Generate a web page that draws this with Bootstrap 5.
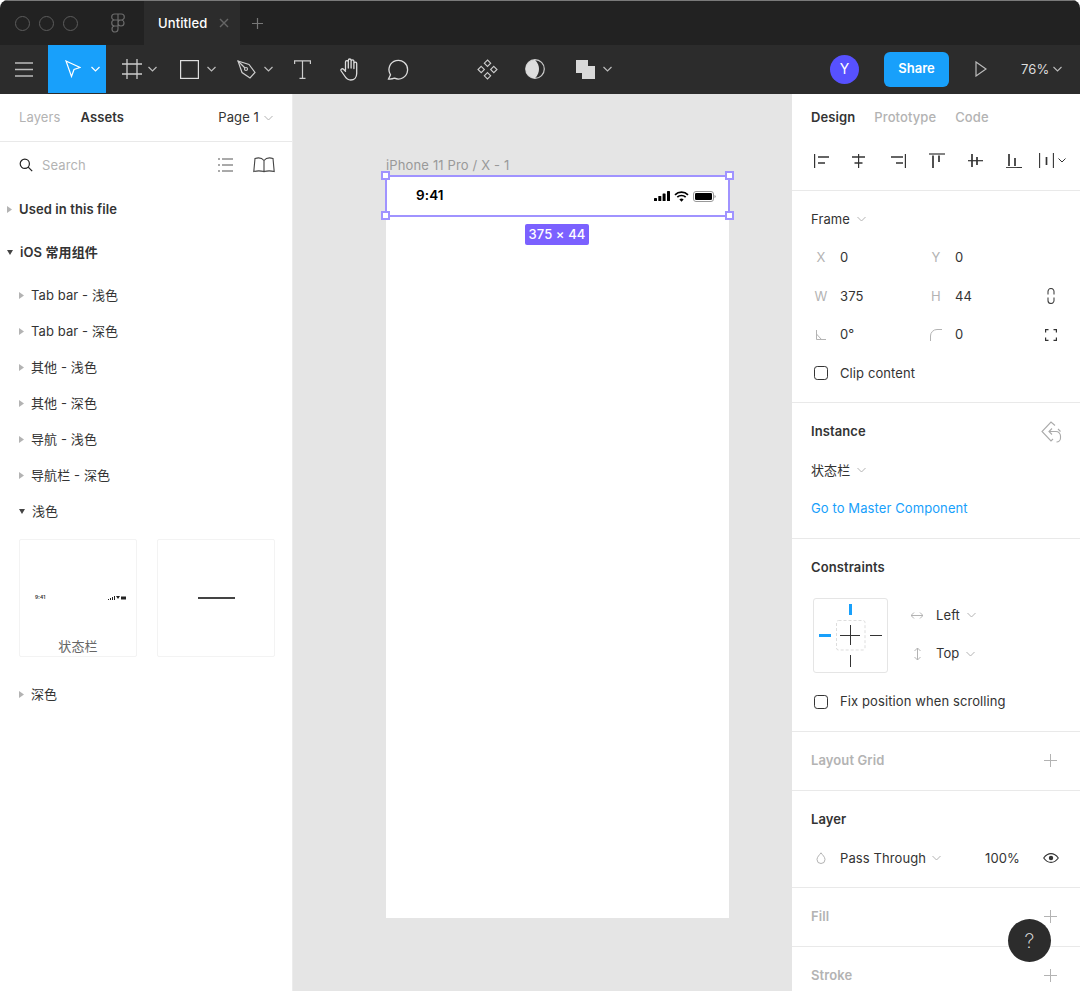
<!DOCTYPE html>
<html lang="en">
<head>
<meta charset="utf-8">
<title>Figma</title>
<link href="https://cdn.jsdelivr.net/npm/bootstrap@5.3.0/dist/css/bootstrap.min.css" rel="stylesheet">
<style>
html,body{height:991px;overflow:hidden;background:#fff}
body{font-family:Inter,"Noto Sans CJK SC",sans-serif;font-size:13px;color:#333;line-height:1;letter-spacing:.1px;-webkit-font-smoothing:antialiased}
svg{display:block;flex:none}
.winframe{height:991px;overflow:hidden;position:relative;border-radius:8px 8px 0 0}
.titlebar{height:45px;background:#222;border-top:1px solid #7a7a7a}
.traffic{width:15px;height:15px;border:1px solid #5c5c5c;border-radius:50%}
.traffics{gap:9px;padding-left:15px;width:110px}
.logoslot{width:34px}
.tabitem{width:96px;height:44px;background:#2c2c2c;color:#fff;font-weight:500;padding-left:14px}
.tabclose{margin-left:12px}
.plusslot{margin-left:11px}
.toolbar{height:49px;background:#2c2c2c;color:#ddd}
.slot{height:48px}
.s48{width:48px}.s57{width:57.5px;padding-left:16.5px}
.activetool{background:#18a0fb}
.chev{margin-left:8px}
.chevwide{margin-left:10px}
.chevtight{margin-left:6px}
.gap41{width:41px}
.toolright{height:48px}
.avatar{width:29px;height:29px;border-radius:50%;background:#5751ff;color:#fff;font-size:14px;margin-right:25px}
.sharebtn{width:65px;height:35px;padding:0;background:#18a0fb;border:0;border-radius:6px;color:#fff;font-size:13px;font-weight:600;margin-right:26px}
.sharebtn:hover{background:#18a0fb;color:#fff}
.zoomval{margin-left:34px;margin-right:18px;color:#ddd;width:41px}
.workarea{height:897px}
.leftpane{width:293px;border-right:1px solid #ececec;background:#fff;flex:none}
.lefttabs{height:48px;padding:0 19px;border-bottom:1px solid #e9e9e9}
.mutedtxt{color:#b3b3b3}
.strong600{font-weight:600;color:#333}
.ms20{margin-left:20px}
.pagechev{margin-left:5px}
.searchrow{height:46px;padding:0 17px 0 19px}
.searchtxt{margin-left:9px;color:#b3b3b3}
.ms20b{margin-left:20px}
.grouprow{height:43px;padding-left:7px}
.itemrow{height:36px;padding-left:19px}
.itemrow .tri,.grouprow .tri{margin-right:7px}
.firstitem{margin-top:3px}
.thumbs{gap:20px;padding:10px 0 19px 19px}
.thumbbox{width:118px;height:118px;border:1px solid #f3f3f3;border-radius:2px;position:relative;flex:none}
.tinytime{font-size:5px;color:#333;position:absolute;left:15px;top:55px;font-weight:600}
.tinyicons{position:absolute;right:10px;top:56px}
.tinyline{width:37px;height:2px;background:#444}
.thumbname{position:absolute;left:0;right:0;bottom:3px;text-align:center;color:#666}
.canvasarea{background:#e5e5e5;position:relative;overflow:hidden}
.framelabel{position:absolute;left:93px;top:65px;color:#999;font-size:13px;letter-spacing:.15px}
.frameboard{position:absolute;left:93px;top:81px;width:343px;height:743px;background:#fff}
.selbox{position:absolute;left:92px;top:81px;width:345px;height:42px;border:2px solid #a093ff}
.handle{position:absolute;width:9px;height:9px;background:#fff;border:2px solid #a093ff}
.hnw{left:88px;top:77px}.hne{left:432px;top:77px}.hsw{left:88px;top:117px}.hse{left:432px;top:117px}
.statusbar{position:absolute;left:93px;top:81px;width:343px;height:42px;padding:0 13px 0 30px}
.statustime{font-weight:600;font-size:13.500px;color:#000}
.sizebadge{position:absolute;left:232px;top:130px;width:64px;height:21px;background:#7b61ff;color:#fff;border-radius:2px;font-weight:500;font-size:13px}
.rightpane{width:288px;background:#fff;flex:none;overflow:hidden}
.sect{padding:9.5px 19px;border-bottom:1px solid #e9e9e9}
.sectextra{padding-bottom:10.5px}
.sectfirst{padding:0 19px 10px;height:96.5px}
.rtabs{height:46px;gap:19px}
.alignrow{height:40px;padding-left:3px;gap:22.4px}
.distgroup{margin-left:-5px;gap:4px}
.prow{height:38.5px;white-space:nowrap}
.flabel{width:20px;margin-right:9px;color:#b3b3b3;flex:none;text-align:center}
.fcol{width:115px;flex:none}
.ficon{width:20px}
.boxcheck{width:14px;height:14px;margin:0 12px 0 3px;border:1px solid #333;border-radius:2px;flex:none;background:#fff}
.boxcheck:focus{box-shadow:none;border-color:#333}
.linkblue{color:#18a0fb;text-decoration:none}
.ctrlblock{height:77px;margin-bottom:9.5px;margin-top:9.5px}
.ctrlbox{margin:2px 0 0 2px;width:75px;height:75px;border:1px solid #e5e5e5;border-radius:3px}
.ctrlcol{margin-left:17px}
.ctrlslot{width:24px;margin-right:7px}
.helpbtn{position:absolute;left:1008px;top:919px;width:43px;height:43px;border-radius:50%;background:#2c2c2c;color:#e8e8e8;font-size:20px;font-weight:200}
.disabledhead{color:#b3b3b3;font-weight:600}
.pct{margin-left:44px;width:58px}
.instanceicon{margin-right:-1px}
.dropchev{margin-left:7px}
.passchev{margin-left:6px}
</style>
</head>
<body>
<div class="winframe">
  <header class="titlebar d-flex align-items-center">
    <div class="traffics d-flex"><span class="traffic"></span><span class="traffic"></span><span class="traffic"></span></div>
    <div class="logoslot">
      <svg width="16" height="20" viewBox="0 0 16 20" fill="none" stroke="#6a6a6a" stroke-width="1.2"><path d="M8 1H4.700a3 3 0 0 0 0 6H8zM8 1h3.300a3 3 0 0 1 0 6H8zM8 7H4.700a3 3 0 0 0 0 6H8zM8 10a3 3 0 1 0 6 0a3 3 0 1 0-6 0zM8 13H4.700a3 3 0 1 0 3.300 3z"/></svg>
    </div>
    <div class="tabitem d-flex align-items-center">Untitled
      <svg class="tabclose" width="10" height="10" viewBox="0 0 10 10" stroke="#666" stroke-width="1.4"><path d="M1 1l8 8M9 1l-8 8"/></svg>
    </div>
    <div class="plusslot"><svg width="13" height="13" viewBox="0 0 13 13" stroke="#777" stroke-width="1.2"><path d="M6.500 1v11M1 6.500h11"/></svg></div>
  </header>

  <nav class="toolbar d-flex align-items-start">
    <div class="slot s48 d-flex align-items-center justify-content-center">
      <svg width="18" height="15" viewBox="0 0 18 15" stroke="#bbb" stroke-width="1.5"><path d="M0 1h18M0 7.500h18M0 14h18"/></svg>
    </div>
    <div class="slot s57 activetool d-flex align-items-center">
      <svg width="16" height="18" viewBox="0 0 16 18" fill="none" stroke="#fff" stroke-width="1.2"><path d="M1 1l14 6.500-6 2-2.500 7z"/></svg>
      <svg class="chevwide" width="9" height="6" viewBox="0 0 9 6" fill="none" stroke="#fff" stroke-width="1.2"><path d="M.5 1l4 4 4-4"/></svg>
    </div>
    <div class="slot s57 d-flex align-items-center">
      <svg width="20" height="20" viewBox="0 0 20 20" fill="none" stroke="#ccc" stroke-width="1.3"><path d="M5 0v20M15 0v20M0 5h20M0 15h20"/></svg>
      <svg class="chevtight" width="9" height="6" viewBox="0 0 9 6" fill="none" stroke="#bbb" stroke-width="1.2"><path d="M.5 1l4 4 4-4"/></svg>
    </div>
    <div class="slot s57 d-flex align-items-center">
      <svg width="19" height="19" viewBox="0 0 19 19" fill="none" stroke="#ddd" stroke-width="1.2"><rect x=".6" y=".6" width="17.800" height="17.800"/></svg>
      <svg class="chev" width="9" height="6" viewBox="0 0 9 6" fill="none" stroke="#bbb" stroke-width="1.2"><path d="M.5 1l4 4 4-4"/></svg>
    </div>
    <div class="slot s57 d-flex align-items-center">
      <svg width="19" height="19" viewBox="0 0 19 19" fill="none" stroke="#ccc" stroke-width="1.200"><path d="M1 1l11 3.500 6 8-5 5.500-8-5.500z"/><path d="M1 1l7 7"/><circle cx="9" cy="9" r="1.500"/></svg>
      <svg class="chev" width="9" height="6" viewBox="0 0 9 6" fill="none" stroke="#bbb" stroke-width="1.2"><path d="M.5 1l4 4 4-4"/></svg>
    </div>
    <div class="slot s48 d-flex align-items-center justify-content-center">
      <svg width="17" height="19" viewBox="0 0 17 19" fill="none" stroke="#ccc" stroke-width="1.200"><path d="M.6 4V.8h15.800V4M8.500.8v17.600M5.500 18.400h6"/></svg>
    </div>
    <div class="slot s48 d-flex align-items-center justify-content-center">
      <svg width="21" height="23" viewBox="0 0 21 23" fill="none" stroke="#ddd" stroke-width="1.300" stroke-linejoin="round" stroke-linecap="round"><path d="M5.500 12V4a1.400 1.400 0 0 1 2.800 0v6M8.300 10V2.400a1.400 1.400 0 0 1 2.800 0V10M11.100 10V3.200a1.400 1.400 0 0 1 2.800 0V10M13.900 10.500V5.500a1.400 1.400 0 0 1 2.800 0v10c0 4-2.500 6.500-6 6.500-3 0-4.500-1.500-6-4l-3.500-5c-1-1.500 1-3 2.300-1.700l2 2"/></svg>
    </div>
    <div class="slot s48 d-flex align-items-center justify-content-center">
      <svg width="22" height="21" viewBox="0 0 22 21" fill="none" stroke="#ddd" stroke-width="1.300"><path d="M1.500 20l2-4.200A9.300 9.300 0 1 1 7.500 19.200c-2 .8-4 .9-6 .8z"/></svg>
    </div>
    <div class="gap41"></div>
    <div class="slot s48 d-flex align-items-center justify-content-center">
      <svg width="21" height="21" viewBox="0 0 21 21" fill="none" stroke="#ccc" stroke-width="1.100"><path d="M10.500 1l3.200 3.200-3.200 3.200-3.200-3.200zM10.500 13.600l3.200 3.200-3.200 3.200-3.200-3.200zM4.200 7.300l3.200 3.200-3.200 3.200L1 10.500zM16.800 7.300l3.200 3.200-3.200 3.200-3.200-3.200z"/></svg>
    </div>
    <div class="slot s48 d-flex align-items-center justify-content-center">
      <svg width="20" height="20" viewBox="0 0 20 20"><circle cx="10" cy="10" r="9.300" fill="none" stroke="#ccc" stroke-width="1.200"/><path d="M10 .7A9.300 9.300 0 0 0 10 19.300C13 16 14 13 14 10S13 4 10 .7z" fill="#ddd"/></svg>
    </div>
    <div class="slot s57 d-flex align-items-center">
      <svg width="19" height="19" viewBox="0 0 19 19"><path d="M0 0h12v6h7v13H6v-6H0z" fill="#d9d9d9"/></svg>
      <svg class="chev" width="9" height="6" viewBox="0 0 9 6" fill="none" stroke="#bbb" stroke-width="1.2"><path d="M.5 1l4 4 4-4"/></svg>
    </div>
    <div class="toolright ms-auto d-flex align-items-center">
      <div class="avatar d-flex align-items-center justify-content-center">Y</div>
      <button type="button" class="btn sharebtn">Share</button>
      <svg width="12" height="16" viewBox="0 0 12 16" fill="none" stroke="#bbb" stroke-width="1.200"><path d="M1 1l10 7-10 7z"/></svg>
      <div class="zoomval d-flex align-items-center justify-content-between">76%
        <svg width="9" height="6" viewBox="0 0 9 6" fill="none" stroke="#bbb" stroke-width="1.100"><path d="M.5 1l4 4 4-4"/></svg>
      </div>
    </div>
  </nav>

  <main class="workarea d-flex">
    <aside class="leftpane">
      <div class="lefttabs d-flex align-items-center">
        <span class="mutedtxt">Layers</span>
        <span class="ms20 strong600">Assets</span>
        <span class="ms-auto d-flex align-items-center">Page 1
          <svg class="pagechev" width="9" height="6" viewBox="0 0 9 6" fill="none" stroke="#b3b3b3"><path d="M.5 1l4 4 4-4"/></svg>
        </span>
      </div>
      <div class="searchrow d-flex align-items-center">
        <svg width="14" height="14" viewBox="0 0 14 14" fill="none" stroke="#222" stroke-width="1.200"><circle cx="5.800" cy="5.800" r="4.600"/><path d="M9.200 9.200l4 4"/></svg>
        <span class="searchtxt">Search</span>
        <svg class="ms-auto" width="15" height="14" viewBox="0 0 15 14" fill="none" stroke="#555"><path d="M0 1h2M4 1h11M0 7h2M4 7h11M0 13h2M4 13h11"/></svg>
        <svg class="ms20b" width="22" height="16" viewBox="0 0 22 16" fill="none" stroke="#444" stroke-width="1.100"><path d="M11 14.500V3.500C9 1 5 .5 2 1.500L.8 14.500c3-.8 7-.8 10.200 0zM11 14.500V3.500c2-2.500 6-3 9-2l1.200 13c-3-.8-7-.8-10.200 0z"/></svg>
      </div>
      <div class="grouprow d-flex align-items-center">
        <svg class="tri" width="5" height="7" viewBox="0 0 5 7" fill="#b3b3b3"><path d="M0 0l5 3.500L0 7z"/></svg>
        <span class="strong600">Used in this file</span>
      </div>
      <div class="grouprow d-flex align-items-center">
        <svg class="tri" width="6" height="5" viewBox="0 0 6 5" fill="#444"><path d="M0 0h6L3 5z"/></svg>
        <span class="strong600">iOS 常用组件</span>
      </div>
      <div class="itemrow firstitem d-flex align-items-center"><svg class="tri" width="5" height="7" viewBox="0 0 5 7" fill="#b3b3b3"><path d="M0 0l5 3.500L0 7z"/></svg>Tab bar - 浅色</div>
      <div class="itemrow d-flex align-items-center"><svg class="tri" width="5" height="7" viewBox="0 0 5 7" fill="#b3b3b3"><path d="M0 0l5 3.500L0 7z"/></svg>Tab bar - 深色</div>
      <div class="itemrow d-flex align-items-center"><svg class="tri" width="5" height="7" viewBox="0 0 5 7" fill="#b3b3b3"><path d="M0 0l5 3.500L0 7z"/></svg>其他 - 浅色</div>
      <div class="itemrow d-flex align-items-center"><svg class="tri" width="5" height="7" viewBox="0 0 5 7" fill="#b3b3b3"><path d="M0 0l5 3.500L0 7z"/></svg>其他 - 深色</div>
      <div class="itemrow d-flex align-items-center"><svg class="tri" width="5" height="7" viewBox="0 0 5 7" fill="#b3b3b3"><path d="M0 0l5 3.500L0 7z"/></svg>导航 - 浅色</div>
      <div class="itemrow d-flex align-items-center"><svg class="tri" width="5" height="7" viewBox="0 0 5 7" fill="#b3b3b3"><path d="M0 0l5 3.500L0 7z"/></svg>导航栏 - 深色</div>
      <div class="itemrow d-flex align-items-center"><svg class="tri" width="6" height="5" viewBox="0 0 6 5" fill="#444"><path d="M0 0h6L3 5z"/></svg>浅色</div>
      <div class="thumbs d-flex">
        <div class="thumbbox">
          <span class="tinytime">9:41</span>
          <svg class="tinyicons" width="18" height="4" viewBox="0 0 18 4" fill="#222"><path d="M0 3h1v1H0zM2 2h1v2H2zM4 1h1v3H4zM6 0h1v4H6zM8 0h4l-2 3zM13 .5h5v3h-5z"/></svg>
          <span class="thumbname">状态栏</span>
        </div>
        <div class="thumbbox d-flex align-items-center justify-content-center"><div class="tinyline"></div></div>
      </div>
      <div class="itemrow d-flex align-items-center"><svg class="tri" width="5" height="7" viewBox="0 0 5 7" fill="#b3b3b3"><path d="M0 0l5 3.500L0 7z"/></svg>深色</div>
    </aside>

    <section class="canvasarea flex-grow-1">
      <div class="frameboard"></div>
      <div class="framelabel">iPhone 11 Pro / X - 1</div>
      <div class="statusbar d-flex align-items-center justify-content-between">
        <span class="statustime">9:41</span>
        <span class="d-flex align-items-center gap-1">
          <svg width="16" height="10" viewBox="0 0 16 10" fill="#000"><rect x="0" y="7" width="3" height="3" rx=".6"/><rect x="4.300" y="5" width="3" height="5" rx=".6"/><rect x="8.600" y="2.500" width="3" height="7.500" rx=".6"/><rect x="13" y="0" width="3" height="10" rx=".6"/></svg>
          <svg width="15" height="11" viewBox="0 0 15 11" fill="none" stroke="#000" stroke-width="1.700"><path d="M1 3.800a9.300 9.300 0 0 1 13 0M3.300 6.200a6 6 0 0 1 8.400 0"/><path d="M7.500 10.800L5.400 8.500a3 3 0 0 1 4.200 0z" fill="#000" stroke="none"/></svg>
          <svg width="23" height="11" viewBox="0 0 23 11"><rect x=".5" y=".5" width="20" height="10" rx="2.500" fill="none" stroke="#999"/><rect x="2" y="2" width="17" height="7" rx="1.300" fill="#000"/><path d="M21.500 4v3c.8-.3 1.200-.8 1.200-1.500S22.300 4.300 21.500 4z" fill="#999"/></svg>
        </span>
      </div>
      <div class="selbox"></div>
      <div class="handle hnw"></div><div class="handle hne"></div><div class="handle hsw"></div><div class="handle hse"></div>
      <div class="sizebadge d-flex align-items-center justify-content-center">375 × 44</div>
    </section>

    <aside class="rightpane">
      <div class="sect sectfirst">
        <div class="rtabs d-flex align-items-center">
          <span class="strong600">Design</span><span class="mutedtxt fw-medium">Prototype</span><span class="mutedtxt fw-medium">Code</span>
        </div>
        <div class="alignrow d-flex align-items-center">
          <svg width="16" height="16" viewBox="0 0 16 16" fill="none" stroke="#333"><path d="M.6 2v14" stroke-width="1.200"/><path d="M4 5h11M4 11h7" stroke-width="1.700"/></svg>
          <svg width="16" height="16" viewBox="0 0 16 16" fill="none" stroke="#333"><path d="M6.600 2v14" stroke-width="1.200"/><path d="M0 5h13M2.500 11h8" stroke-width="1.700"/></svg>
          <svg width="16" height="16" viewBox="0 0 16 16" fill="none" stroke="#333"><path d="M14.400 2v14" stroke-width="1.200"/><path d="M0 5h12M5 11h7" stroke-width="1.700"/></svg>
          <svg width="16" height="16" viewBox="0 0 16 16" fill="none" stroke="#333"><path d="M0 2h16" stroke-width="1.200"/><path d="M4 3.500V16M10 3.500V10" stroke-width="1.700"/></svg>
          <svg width="16" height="16" viewBox="0 0 16 16" fill="none" stroke="#333"><path d="M0 8.700h15" stroke-width="1.200"/><path d="M4 2v13M9 5v8" stroke-width="1.700"/></svg>
          <svg width="16" height="16" viewBox="0 0 16 16" fill="none" stroke="#333"><path d="M0 15.700h16" stroke-width="1.200"/><path d="M3 2v12M9 6v8" stroke-width="1.700"/></svg>
          <span class="distgroup d-flex align-items-center">
            <svg width="15" height="16" viewBox="0 0 15 16" fill="none" stroke="#333"><path d="M.6 1v15M14.400 1v15" stroke-width="1.100"/><path d="M7.500 5v8" stroke-width="1.700"/></svg>
            <svg width="8" height="5" viewBox="0 0 8 5" fill="none" stroke="#333"><path d="M.5.5L4 4 7.500.5"/></svg>
          </span>
        </div>
      </div>

      <div class="sect">
        <div class="prow d-flex align-items-center">Frame <svg class="dropchev" width="9" height="6" viewBox="0 0 9 6" fill="none" stroke="#b3b3b3"><path d="M.5 1l4 4 4-4"/></svg></div>
        <div class="prow d-flex align-items-center">
          <div class="fcol d-flex"><span class="flabel">X</span>0</div>
          <div class="fcol d-flex"><span class="flabel">Y</span>0</div>
        </div>
        <div class="prow d-flex align-items-center">
          <div class="fcol d-flex"><span class="flabel">W</span>375</div>
          <div class="fcol d-flex"><span class="flabel">H</span>44</div>
          <span class="ficon d-flex justify-content-center"><svg width="8" height="16" viewBox="0 0 8 16" fill="none" stroke="#444" stroke-width="1.100"><path d="M1 6.500V3.500a3 3 0 0 1 6 0v3M1 9.500v3a3 3 0 0 0 6 0v-3"/></svg></span>
        </div>
        <div class="prow d-flex align-items-center">
          <div class="fcol d-flex align-items-center"><span class="flabel d-flex justify-content-center"><svg width="10" height="10" viewBox="0 0 10 10" fill="none" stroke="#b3b3b3"><path d="M.5 0v9.500H10M.5 4l5 5.500"/></svg></span>0°</div>
          <div class="fcol d-flex align-items-center"><span class="flabel d-flex justify-content-center"><svg width="12" height="12" viewBox="0 0 12 12" fill="none" stroke="#b3b3b3"><path d="M.5 12V7A6.500 6.500 0 0 1 7 .5h5"/></svg></span>0</div>
          <span class="ficon d-flex justify-content-center"><svg width="12" height="12" viewBox="0 0 12 12" fill="none" stroke="#333" stroke-width="1.200"><path d="M.6 3.500V.6h2.900M8.500.6h2.900v2.900M11.400 8.500v2.900H8.500M3.500 11.400H.6V8.500"/></svg></span>
        </div>
        <div class="prow d-flex align-items-center"><input class="form-check-input boxcheck" type="checkbox" aria-label="Clip content">Clip content</div>
      </div>

      <div class="sect">
        <div class="prow d-flex align-items-center justify-content-between">
          <span class="strong600">Instance</span>
          <svg class="instanceicon" width="21" height="22" viewBox="0 0 21 22" fill="none" stroke="#aaa" stroke-width="1.100"><path d="M14 4.500L10 1 1 10.500l9 9.500 2-2M17 8l2.500 2.500"/><path d="M8 10.500h7a4.500 4.500 0 0 1 4.500 4.500v2a4 4 0 0 1-4 4M11 7.500l-3 3 3 3"/></svg>
        </div>
        <div class="prow d-flex align-items-center">状态栏 <svg class="dropchev" width="9" height="6" viewBox="0 0 9 6" fill="none" stroke="#b3b3b3"><path d="M.5 1l4 4 4-4"/></svg></div>
        <div class="prow d-flex align-items-center"><a class="linkblue" href="#">Go to Master Component</a></div>
      </div>

      <div class="sect">
        <div class="prow d-flex align-items-center strong600">Constraints</div>
        <div class="ctrlblock d-flex">
          <div class="ctrlbox">
            <svg width="73" height="73" viewBox="0 0 73 73" fill="none">
              <path d="M36.500 5v11" stroke="#18a0fb" stroke-width="3"/>
              <path d="M5 36.500h12" stroke="#18a0fb" stroke-width="3"/>
              <path d="M56 36.500h12M36.500 56v12M26 36.500h20M36.500 26v20" stroke="#333"/>
              <rect x="22.500" y="21.500" width="28.500" height="29.500" rx="2" stroke="#ddd" stroke-dasharray="3 2"/>
            </svg>
          </div>
          <div class="ctrlcol">
            <div class="prow d-flex align-items-center">
              <span class="ctrlslot d-flex justify-content-center"><svg width="12" height="7" viewBox="0 0 12 7" fill="none" stroke="#b3b3b3"><path d="M0 3.500h12M3 .5l-3 3 3 3M9 .5l3 3-3 3"/></svg></span>Left
              <svg class="dropchev" width="9" height="6" viewBox="0 0 9 6" fill="none" stroke="#b3b3b3"><path d="M.5 1l4 4 4-4"/></svg>
            </div>
            <div class="prow d-flex align-items-center">
              <span class="ctrlslot d-flex justify-content-center"><svg width="7" height="12" viewBox="0 0 7 12" fill="none" stroke="#b3b3b3"><path d="M3.500 0v12M.5 3l3-3 3 3M.5 9l3 3 3-3"/></svg></span>Top
              <svg class="dropchev" width="9" height="6" viewBox="0 0 9 6" fill="none" stroke="#b3b3b3"><path d="M.5 1l4 4 4-4"/></svg>
            </div>
          </div>
        </div>
        <div class="prow d-flex align-items-center"><input class="form-check-input boxcheck" type="checkbox" aria-label="Fix position when scrolling">Fix position when scrolling</div>
      </div>

      <div class="sect sectextra">
        <div class="prow d-flex align-items-center justify-content-between">
          <span class="disabledhead">Layout Grid</span>
          <svg class="me-1" width="13" height="13" viewBox="0 0 13 13" stroke="#b3b3b3"><path d="M6.500 0v13M0 6.500h13"/></svg>
        </div>
      </div>

      <div class="sect">
        <div class="prow d-flex align-items-center strong600">Layer</div>
        <div class="prow d-flex align-items-center">
          <span class="flabel d-flex justify-content-center"><svg width="10" height="12" viewBox="0 0 10 12" fill="none" stroke="#b3b3b3"><path d="M5 .8C3.500 3 1 5 1 7.500a4 4 0 0 0 8 0C9 5 6.500 3 5 .8z"/></svg></span>
          Pass Through
          <svg class="passchev" width="9" height="6" viewBox="0 0 9 6" fill="none" stroke="#b3b3b3"><path d="M.5 1l4 4 4-4"/></svg>
          <span class="pct">100%</span>
          <svg width="16" height="10" viewBox="0 0 16 10" fill="none" stroke="#333" stroke-width="1.100"><path d="M.7 5C3 1.800 5.500.6 8 .6s5 1.200 7.300 4.400C13 8.200 10.500 9.400 8 9.400S3 8.200.7 5z"/><circle cx="8" cy="5" r="2.200" fill="#333" stroke="none"/></svg>
        </div>
      </div>

      <div class="sect">
        <div class="prow d-flex align-items-center justify-content-between">
          <span class="disabledhead">Fill</span>
          <svg class="me-1" width="13" height="13" viewBox="0 0 13 13" stroke="#b3b3b3"><path d="M6.500 0v13M0 6.500h13"/></svg>
        </div>
      </div>

      <div class="sect">
        <div class="prow d-flex align-items-center justify-content-between">
          <span class="disabledhead">Stroke</span>
          <svg class="me-1" width="13" height="13" viewBox="0 0 13 13" stroke="#b3b3b3"><path d="M6.500 0v13M0 6.500h13"/></svg>
        </div>
      </div>
    </aside>
  </main>
  <div class="helpbtn d-flex align-items-center justify-content-center">?</div>
</div>
<script src="https://cdn.jsdelivr.net/npm/bootstrap@5.3.0/dist/js/bootstrap.bundle.min.js"></script>
</body>
</html>
